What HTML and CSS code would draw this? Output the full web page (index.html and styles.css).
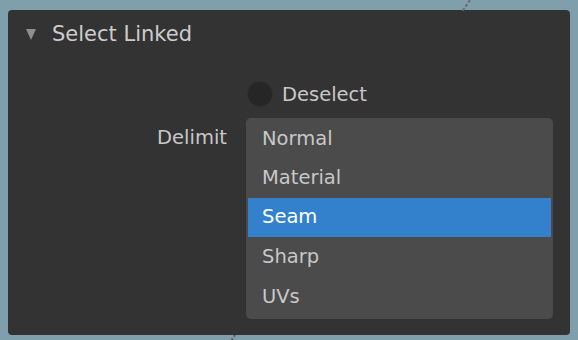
FILE: index.html
```html
<!DOCTYPE html>
<html lang="en">
<head>
<meta charset="UTF-8">
<title>Select Linked</title>
<link rel="stylesheet" href="styles.css">
</head>
<body>

<svg class="guide guide-top" width="20" height="12" viewBox="0 0 20 12">
    <line x1="16" y1="0" x2="8" y2="12" stroke="#6b6b6b" stroke-width="2" stroke-dasharray="3 2"/>
</svg>

<div class="panel">
    <div class="panel-header">
        <span class="arrow"></span>
        <span class="title">Select Linked</span>
    </div>
    <div class="props">
        <div class="label"></div>
        <div class="check-row">
            <span class="radio"></span>
            <span>Deselect</span>
        </div>

        <div class="label delimit">Delimit</div>
        <ul class="enum-list">
            <li>Normal</li>
            <li>Material</li>
            <li class="active">Seam</li>
            <li>Sharp</li>
            <li>UVs</li>
        </ul>
    </div>
</div>

<svg class="guide guide-bottom" width="12" height="6" viewBox="0 0 12 6">
    <line x1="9" y1="0" x2="5" y2="6" stroke="#5a5a5a" stroke-width="2" stroke-dasharray="2 2"/>
</svg>

</body>
</html>
```

FILE: styles.css
```css
body {
    margin: 0;
    padding: 10px 8px 0 8px;
    background-color: #809fac;
    font-family: "DejaVu Sans", sans-serif;
    font-size: 19.5px;
    color: #c8c8c8;
    height: 340px;
    box-sizing: border-box;
    overflow: hidden;
    position: relative;
}
.guide {
    position: absolute;
}
.guide-top {
    left: 454px;
    top: 0;
}
.guide-bottom {
    left: 226px;
    top: 335px;
}
.panel {
    width: 562px;
    height: 325px;
    background-color: #333333;
    border-radius: 4px;
    box-sizing: border-box;
}
.panel-header {
    display: flex;
    align-items: center;
    height: 48px;
    padding-left: 18px;
    box-sizing: border-box;
}
.arrow {
    width: 0;
    height: 0;
    border-left: 5.5px solid transparent;
    border-right: 5.5px solid transparent;
    border-top: 11px solid #8f8f8f;
    margin-right: 16px;
    margin-top: 1px;
}
.title {
    font-size: 21px;
    color: #cccccc;
}
.props {
    display: grid;
    grid-template-columns: 219px 307px;
    column-gap: 19px;
    row-gap: 11px;
    padding-top: 23px;
}
.label {
    text-align: right;
    color: #c8c8c8;
}
.delimit {
    line-height: 40px;
}
.check-row {
    display: flex;
    align-items: center;
    height: 26px;
    margin-left: 1px;
}
.radio {
    width: 24px;
    height: 24px;
    border-radius: 50%;
    background-color: #262626;
    border: 1px solid #2e2e2e;
    margin-right: 9px;
}
.enum-list {
    list-style-type: none;
    margin: 0;
    padding: 2px 2px 2px 2px;
    background-color: #4b4b4b;
    border-radius: 5px;
}
.enum-list li {
    height: 39px;
    line-height: 38px;
    padding-left: 14px;
    color: #c8c8c8;
}
.enum-list li:nth-child(n+4) {
    height: 40px;
    line-height: 40px;
}
.enum-list li.active {
    background-color: #3380cc;
    color: #ffffff;
}
```
